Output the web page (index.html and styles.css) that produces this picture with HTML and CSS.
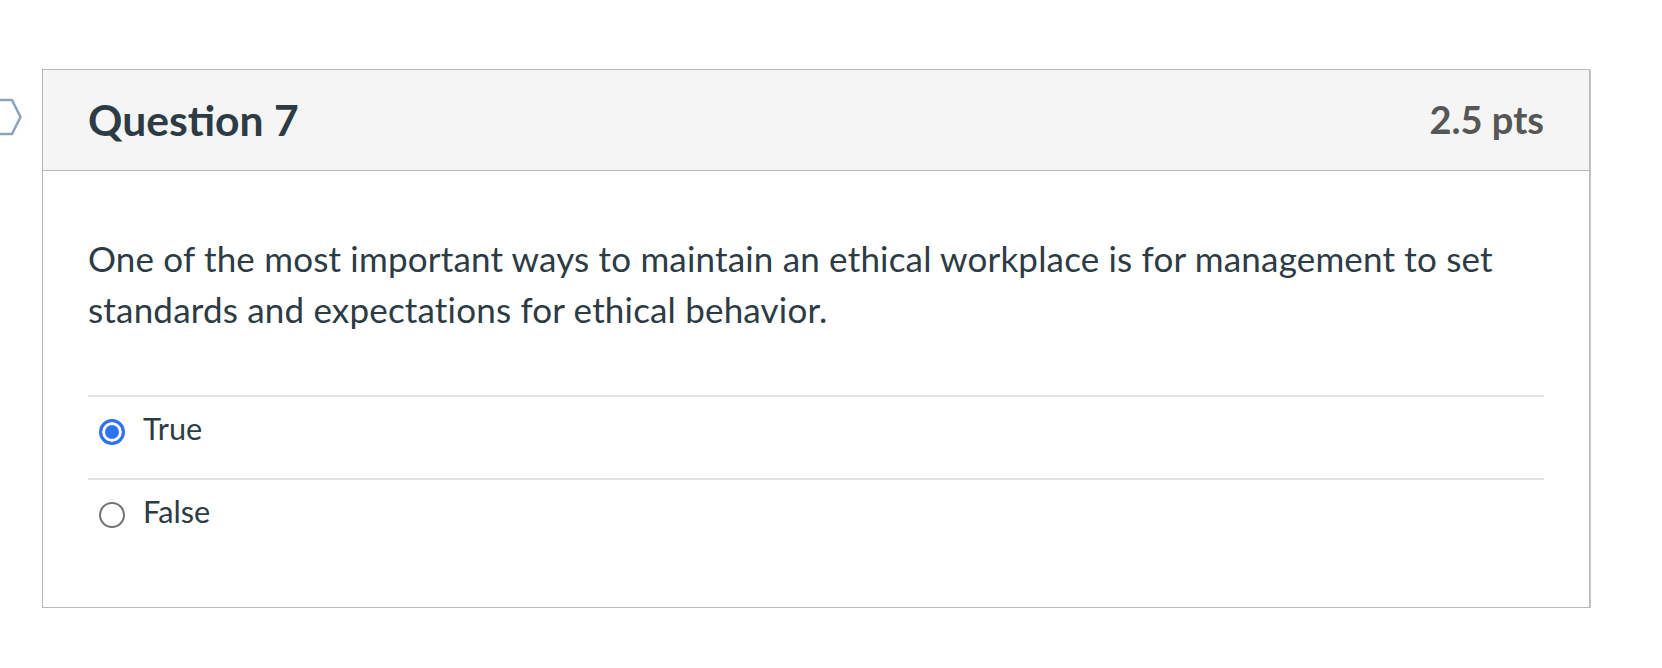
FILE: index.html
```html
<!DOCTYPE html>
<html lang="en">
<head>
<meta charset="utf-8">
<title>Question 7</title>
<link rel="stylesheet" href="styles.css">
</head>
<body>
<div class="page">
  <div class="flag-col">
    <svg class="flag" width="22" height="38" viewBox="0 0 22 38" aria-hidden="true">
      <path d="M-4 2 H12 L20.5 19 L12 36 H-4" fill="none" stroke="#8ea3bb" stroke-width="2.6" stroke-linejoin="round"/>
    </svg>
  </div>
  <div class="card">
    <div class="card-header">
      <h2 class="title">Question 7</h2>
      <span class="pts">2.5 pts</span>
    </div>
    <div class="card-body">
      <p class="question">One of the most important ways to maintain an ethical workplace is for management to set standards and expectations for ethical behavior.</p>
      <div class="answers">
        <div class="answer">
          <span class="radio checked"></span>
          <span class="answer-text">True</span>
        </div>
        <div class="answer">
          <span class="radio"></span>
          <span class="answer-text">False</span>
        </div>
      </div>
    </div>
  </div>
</div>
</body>
</html>
```
FILE: styles.css
```css
html, body {
  margin: 0;
  padding: 0;
  background: #ffffff;
}

body {
  font-family: Lato, "Liberation Sans", sans-serif;
  color: #2d3b45;
}

.page {
  display: flex;
  align-items: flex-start;
  padding-top: 69px;
}

.flag-col {
  width: 42px;
  flex: none;
}

.flag {
  display: block;
  margin-top: 29px;
}

.card {
  box-sizing: border-box;
  width: 1548px;
  border: 1px solid #b8b8b8;
  box-shadow: 1px 1px 0 #c9c9c9;
  background: #ffffff;
}

.card-header {
  box-sizing: border-box;
  height: 101px;
  display: flex;
  align-items: center;
  justify-content: space-between;
  padding: 0 45px;
  background: #f5f5f5;
  border-bottom: 1px solid #b8b8b8;
}

.title {
  margin: 0;
  font-size: 42.6px;
  font-weight: 700;
  color: #2d3b45;
  line-height: 1;
}

.pts {
  font-size: 38px;
  font-weight: 700;
  color: #565656;
  line-height: 1;
  margin-top: -2px;
}

.card-body {
  padding: 62px 45px 46px;
}

.question {
  margin: 0 0 60px;
  font-size: 35px;
  letter-spacing: 0.18px;
  line-height: 51px;
  color: #2d3b45;
}

.answers {
  display: flex;
  flex-direction: column;
}

.answer {
  display: flex;
  align-items: flex-start;
  border-top: 2px solid #e3e3e3;
  padding: 8px 0 25px;
}

.radio {
  box-sizing: border-box;
  flex: none;
  width: 26px;
  height: 26px;
  margin: 14px 18px 0 11px;
  border-radius: 50%;
  border: 2px solid #737373;
  background: #ffffff;
}

.radio.checked {
  border: 3px solid #2f73f5;
  box-shadow: inset 0 0 0 3px #ffffff;
  background: #2f73f5;
}

.answer-text {
  font-size: 30.7px;
  line-height: 48px;
}
```
